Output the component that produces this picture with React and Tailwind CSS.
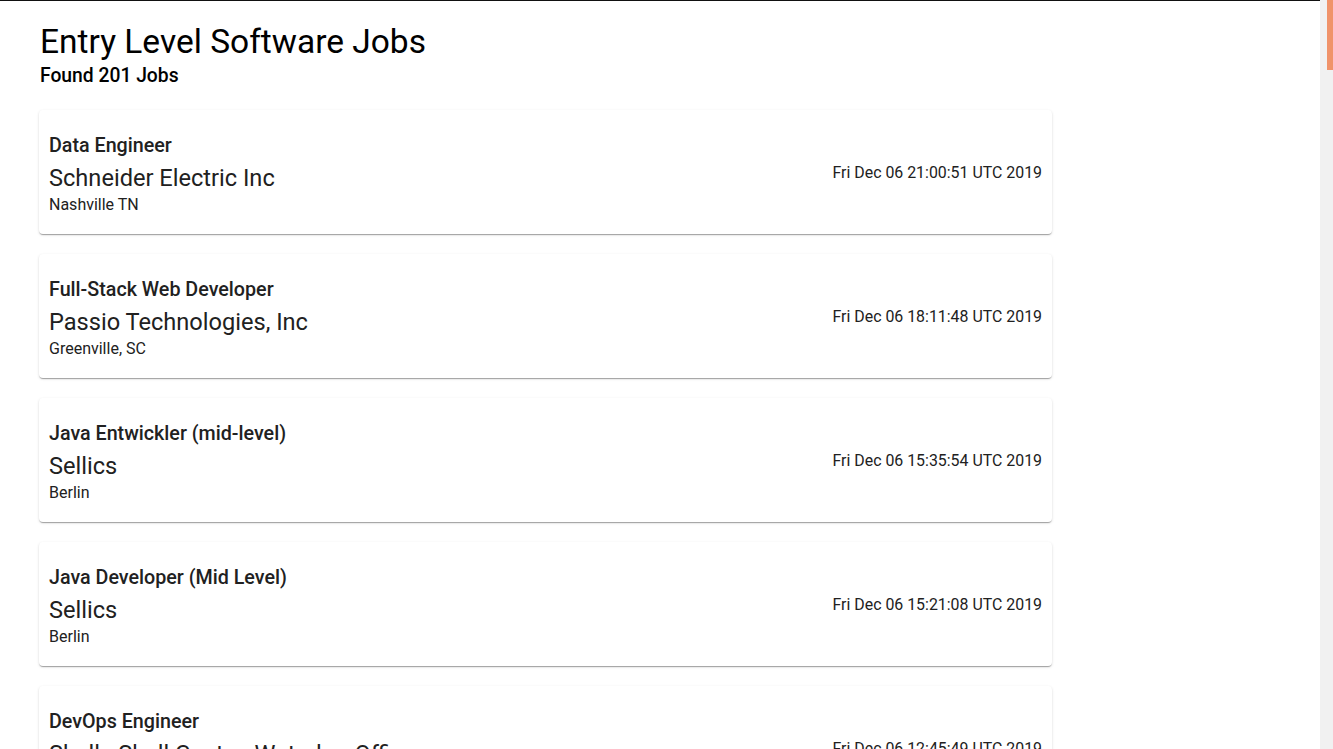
import React from 'react';

const JOBS = [
  { title: 'Data Engineer', company: 'Schneider Electric Inc', location: 'Nashville TN', date: 'Fri Dec 06 21:00:51 UTC 2019' },
  { title: 'Full-Stack Web Developer', company: 'Passio Technologies, Inc', location: 'Greenville, SC', date: 'Fri Dec 06 18:11:48 UTC 2019' },
  { title: 'Java Entwickler (mid-level)', company: 'Sellics', location: 'Berlin', date: 'Fri Dec 06 15:35:54 UTC 2019' },
  { title: 'Java Developer (Mid Level)', company: 'Sellics', location: 'Berlin', date: 'Fri Dec 06 15:21:08 UTC 2019' },
  { title: 'DevOps Engineer', company: 'Shell - Shell Centre, Waterloo Office', location: 'London', date: 'Fri Dec 06 12:45:49 UTC 2019' },
];

const JobCard = ({ job }) => (
  <div className="w-[1013px] shrink-0 bg-white rounded-[4px] shadow-[0px_2px_1px_-1px_rgba(0,0,0,0.2),0px_1px_1px_0px_rgba(0,0,0,0.14),0px_1px_3px_0px_rgba(0,0,0,0.12)] px-[10px] pt-[21px] pb-[17px] flex items-center justify-between">
    <div className="flex flex-col min-w-0">
      <p className="text-[19.7px] leading-[30px] mb-[2px] font-medium text-[#212121]">{job.title}</p>
      <p className="text-[23.6px] leading-[30px] text-[#212121] whitespace-nowrap">{job.company}</p>
      <p className="text-[16px] leading-[24px] text-[#212121]">{job.location}</p>
    </div>
    <p className="text-[15.9px] leading-[24px] text-[#212121] whitespace-nowrap -mt-[2px]">{job.date}</p>
  </div>
);

export default function App() {
  return (
    <div className="h-[749px] flex bg-white overflow-hidden font-['Roboto','Liberation_Sans',sans-serif]">
      {/* Page */}
      <div className="flex-1 min-w-0 border-t border-[#111] px-[39px] overflow-hidden">
        <h1 className="mt-[20px] pl-px text-[33.5px] leading-[42px] font-normal text-black">Entry Level Software Jobs</h1>
        <h2 className="pl-px text-[19.3px] leading-[26px] font-medium text-black">Found 201 Jobs</h2>
        <div className="mt-[21px] flex flex-col gap-[20px]">
          {JOBS.map((job) => (
            <JobCard key={job.date} job={job} />
          ))}
        </div>
      </div>

      {/* Scrollbar */}
      <div className="w-[13px] shrink-0 bg-[#f1f1f1] flex justify-end">
        <div className="w-[6px] h-[70px] bg-[#f0936a]" />
      </div>
    </div>
  );
}
